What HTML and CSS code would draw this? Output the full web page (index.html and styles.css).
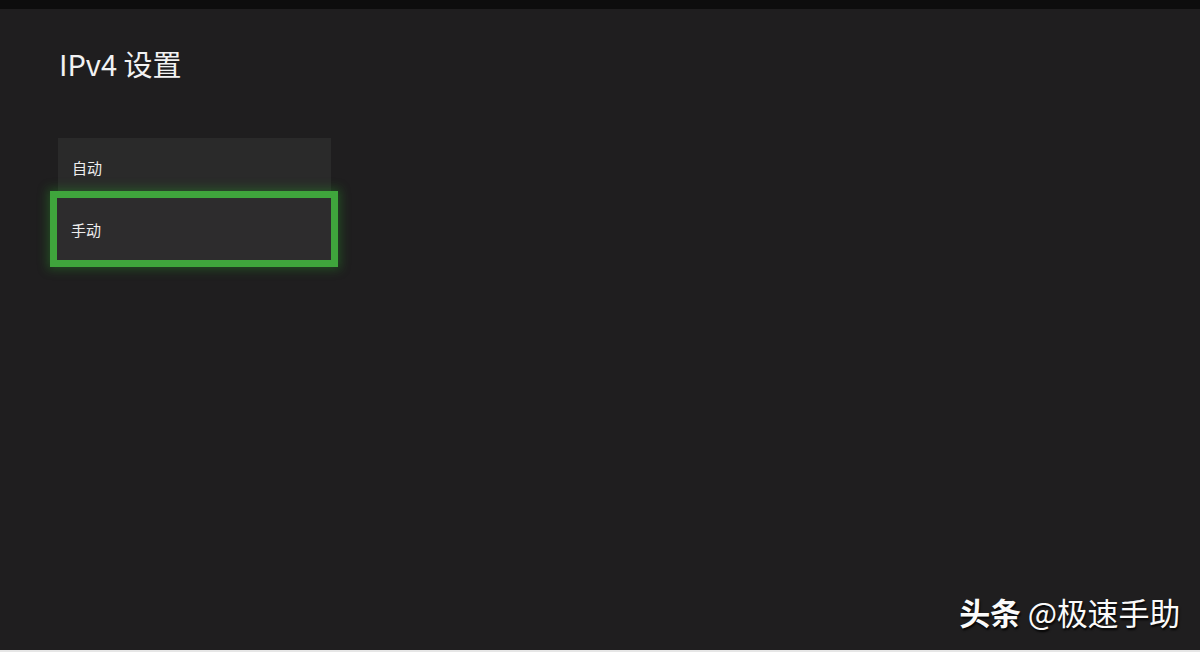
FILE: index.html
```html
<!DOCTYPE html>
<html lang="zh-CN">
<head>
  <meta charset="UTF-8">
  <title>IPv4 设置</title>
  <link rel="stylesheet" href="styles.css">
</head>
<body>
  <div class="topbar"></div>
  <main class="page">
    <h1 class="title">IPv4 设置</h1>
    <ul class="options">
      <li class="option">自动</li>
      <li class="option selected">手动</li>
    </ul>
  </main>
  <div class="watermark"><b>头条</b> @极速手助</div>
  <div class="bottomline"></div>
</body>
</html>
```

FILE: styles.css
```css
* {
  margin: 0;
  padding: 0;
  box-sizing: border-box;
}

body {
  width: 1200px;
  height: 652px;
  overflow: hidden;
  background: #1f1e1f;
  color: #ececec;
  font-family: "Noto Sans CJK SC", "Noto Sans", sans-serif;
  display: flex;
  flex-direction: column;
  position: relative;
}

.topbar {
  height: 9px;
  background: #0d0d0d;
}

.page {
  flex: 1;
  padding: 35px 0 0 58px;
}

.title {
  font-size: 29px;
  font-weight: 400;
  line-height: 38px;
  margin-left: 1px;
  color: #f2f2f2;
}

.options {
  list-style: none;
  margin-top: 56px;
  width: 273px;
}

.option {
  height: 53px;
  background: #2a2a2a;
  font-size: 15px;
  line-height: 59px;
  padding-left: 14px;
  color: #ededed;
}

.option.selected {
  margin: 0 -7px 0 -8px;
  height: 76px;
  line-height: 64px;
  padding-left: 14px;
  background: #2d2c2d;
  border: 7px solid #3fa53c;
  box-shadow: 0 0 10px 2px rgba(40, 140, 40, 0.45);
}

.watermark {
  position: absolute;
  right: 20px;
  bottom: 18px;
  font-size: 31px;
  letter-spacing: -0.2px;
  color: #fafafa;
  text-shadow: 1px 2px 2px rgba(0, 0, 0, 0.9);
}

.watermark b {
  font-weight: 700;
}

.bottomline {
  height: 2px;
  background: #e6e6e6;
}
```
